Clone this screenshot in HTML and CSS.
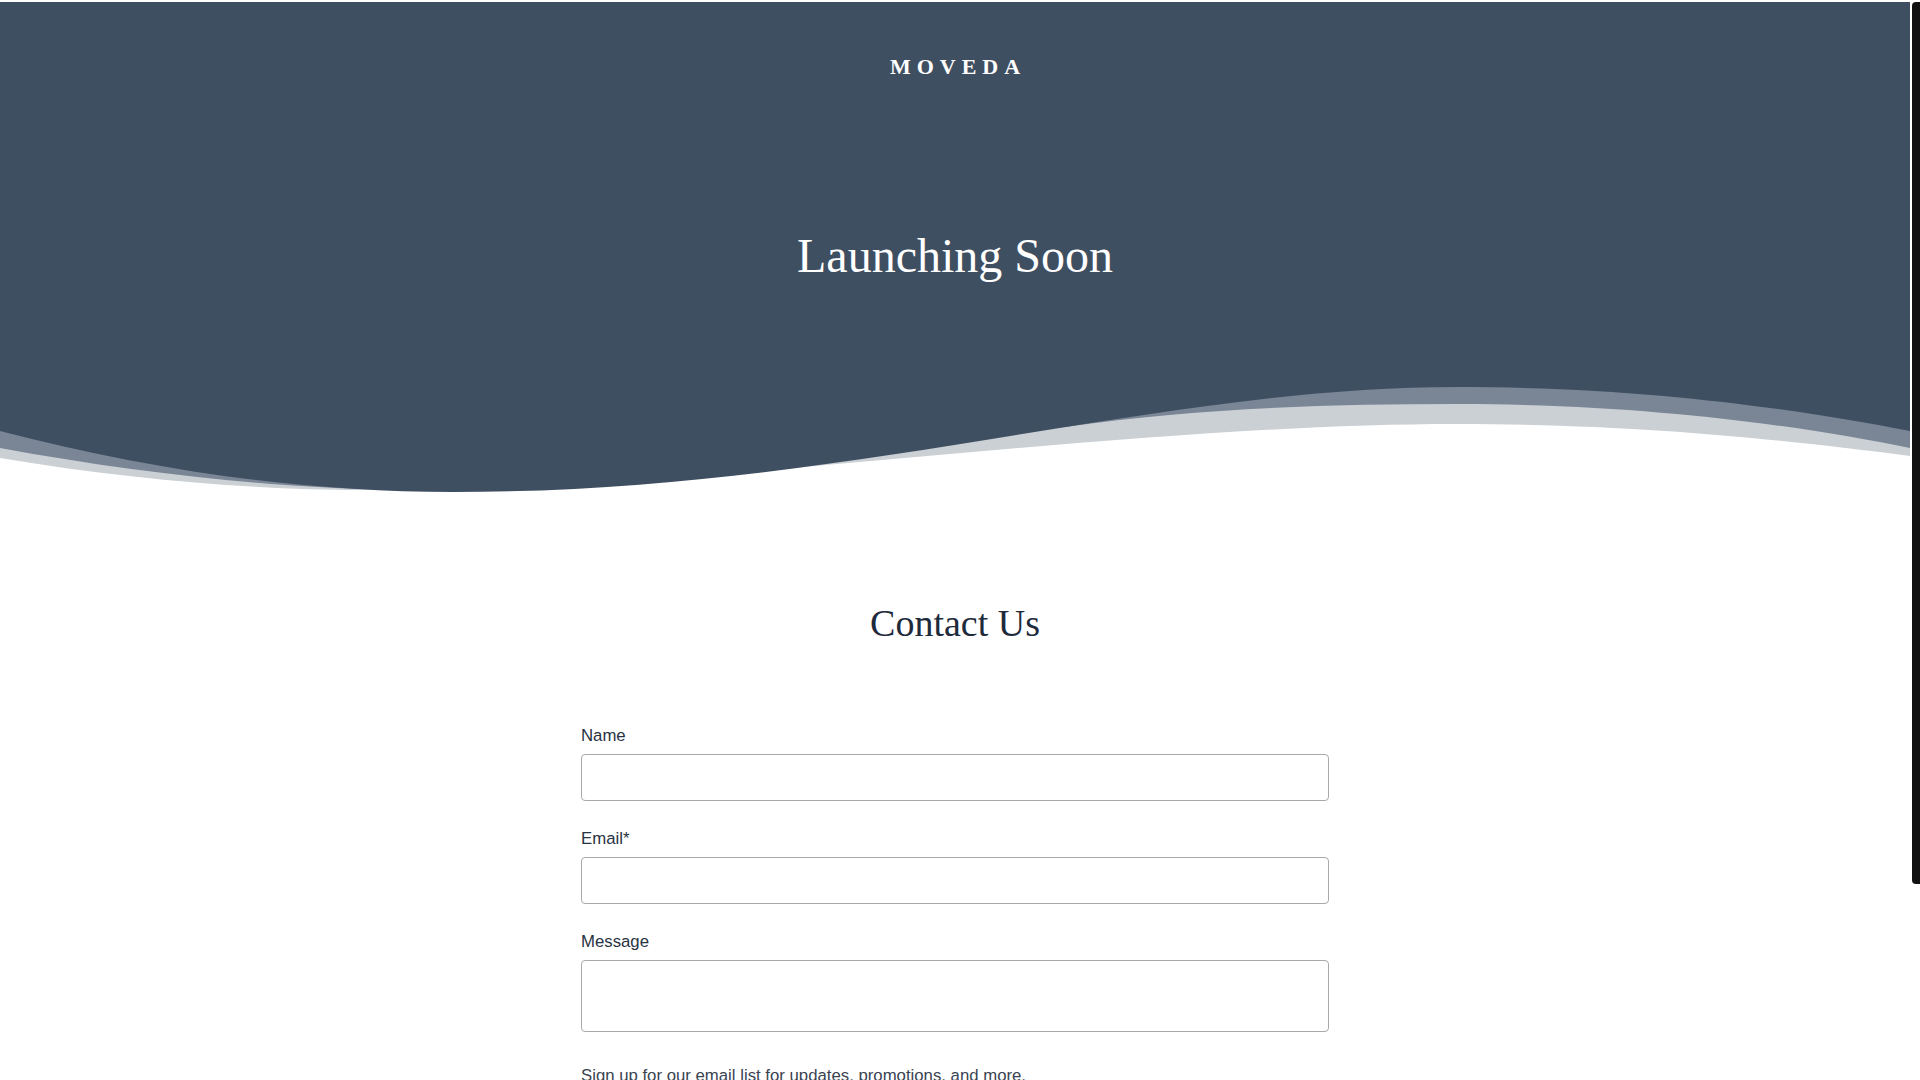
FILE: index.html
```html
<!DOCTYPE html>
<html lang="en">
<head>
<meta charset="utf-8">
<title>Moveda — Launching Soon</title>
<link rel="stylesheet" href="styles.css">
</head>
<body>
<header class="hero">
  <div class="brand">MOVEDA</div>
  <h1 class="hero-title">Launching Soon</h1>
  <svg class="wave" viewBox="0 0 1910 120" preserveAspectRatio="none" aria-hidden="true">
    <path class="wave-light" d="M0,78 C130,100 260,110 361,110 C550,108 680,96 770,90 C1000,70 1250,44 1457,44 C1650,44 1800,62 1910,76 V0 H0 Z"/>
    <path class="wave-mid" d="M0,68 C130,92 260,106 361,109 C600,104 850,60 1065,47 C1200,28 1330,24 1457,24 C1650,24 1800,46 1910,68 V0 H0 Z"/>
    <path class="wave-dark" d="M0,51 C150,90 300,112 453,112 C850,112 1150,7 1457,7 C1650,7 1800,30 1910,51 V0 H0 Z"/>
  </svg>
</header>

<main class="contact">
  <h2 class="contact-title">Contact Us</h2>
  <form class="contact-form">
    <div class="field">
      <label class="field-label" for="name">Name</label>
      <input class="field-input" id="name" type="text">
    </div>
    <div class="field">
      <label class="field-label" for="email">Email*</label>
      <input class="field-input" id="email" type="email">
    </div>
    <div class="field">
      <label class="field-label" for="message">Message</label>
      <textarea class="field-input field-textarea" id="message"></textarea>
    </div>
    <p class="signup-text">Sign up for our email list for updates, promotions, and more.</p>
    <button class="submit" type="button">Send</button>
  </form>
</main>

<footer class="footer">© Moveda</footer>

<div class="scrollbar" aria-hidden="true"><div class="scrollbar-thumb"></div></div>
</body>
</html>
```

FILE: styles.css
```css
html {
  background: #ffffff;
}

body {
  margin: 0;
  padding: 2px 10px 0 0;
  background: #ffffff;
  font-family: "Liberation Sans", Arial, sans-serif;
}

.scrollbar {
  position: fixed;
  top: 0;
  right: 0;
  width: 10px;
  height: 100vh;
  background: #ffffff;
}

.scrollbar-thumb {
  margin: 2px 0 0 2px;
  width: 8px;
  height: 882px;
  background: #111111;
  border-radius: 4px 0 0 4px;
}

.hero {
  background: #3f4f62;
  display: flex;
  flex-direction: column;
  align-items: center;
  padding-top: 52px;
}

.brand {
  font-family: "Liberation Serif", "Times New Roman", serif;
  font-weight: 700;
  font-size: 22px;
  line-height: 26px;
  letter-spacing: 6px;
  padding-left: 6px;
  color: #ffffff;
}

.hero-title {
  margin: 148px 0 0;
  font-family: "Liberation Serif", "Times New Roman", serif;
  font-weight: 400;
  font-size: 48px;
  line-height: 56px;
  color: #ffffff;
}

.wave {
  display: block;
  width: 100%;
  height: 120px;
  margin-top: 96px;
  background: #ffffff;
}

.wave-dark {
  fill: #3f4f62;
}

.wave-mid {
  fill: #7a8696;
}

.wave-light {
  fill: #cbd0d5;
}

.contact {
  display: flex;
  flex-direction: column;
  align-items: center;
  padding-top: 101px;
}

.contact-title {
  margin: 0;
  font-family: "Liberation Serif", "Times New Roman", serif;
  font-weight: 400;
  font-size: 38px;
  line-height: 45.6px;
  color: #1e2a3b;
}

.contact-form {
  width: 748px;
  margin-top: 79px;
  display: flex;
  flex-direction: column;
  gap: 28px;
}

.field {
  display: flex;
  flex-direction: column;
}

.field-label {
  font-size: 16.75px;
  line-height: 20px;
  color: #283241;
  margin-bottom: 8px;
}

.field-input {
  box-sizing: border-box;
  width: 100%;
  height: 47px;
  margin: 0;
  border: 1px solid #a9a9a9;
  border-radius: 4px;
  background: #ffffff;
  font-family: "Liberation Sans", Arial, sans-serif;
  font-size: 16px;
  padding: 0 12px;
}

.field-textarea {
  height: 72px;
  resize: none;
  padding: 10px 12px;
}

.signup-text {
  margin: 6px 0 0;
  font-size: 16.75px;
  line-height: 20px;
  color: #3a4351;
}

.submit {
  align-self: flex-start;
  height: 44px;
  padding: 0 28px;
  border: 0;
  border-radius: 4px;
  background: #3f4f62;
  color: #ffffff;
  font-family: "Liberation Sans", Arial, sans-serif;
  font-size: 16px;
}

.footer {
  height: 100px;
  margin-top: 70px;
  display: flex;
  align-items: center;
  justify-content: center;
  font-size: 14px;
  color: #6b7380;
}
```
